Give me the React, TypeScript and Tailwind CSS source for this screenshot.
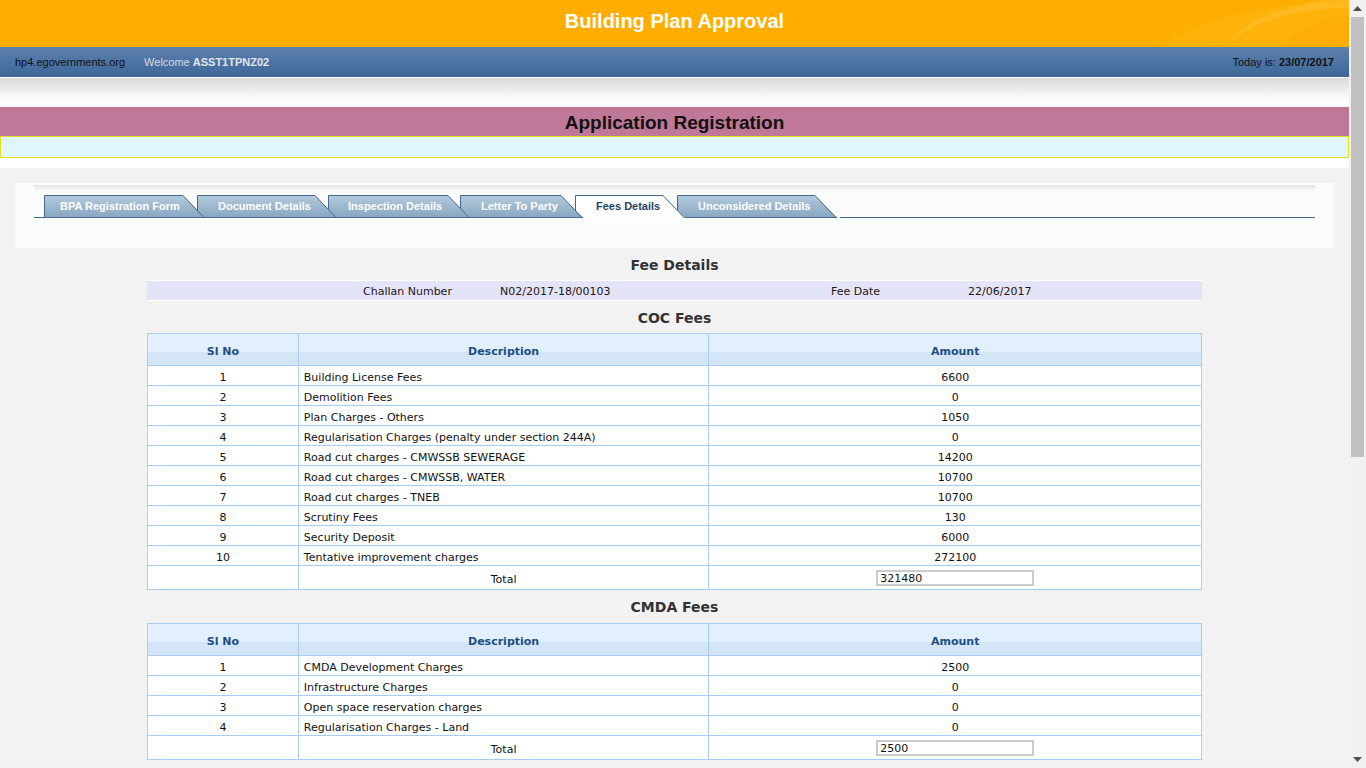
import React from 'react';

const cocFees: [string, string][] = [
  ['Building License Fees', '6600'],
  ['Demolition Fees', '0'],
  ['Plan Charges - Others', '1050'],
  ['Regularisation Charges (penalty under section 244A)', '0'],
  ['Road cut charges - CMWSSB SEWERAGE', '14200'],
  ['Road cut charges - CMWSSB, WATER', '10700'],
  ['Road cut charges - TNEB', '10700'],
  ['Scrutiny Fees', '130'],
  ['Security Deposit', '6000'],
  ['Tentative improvement charges', '272100'],
];

const cmdaFees: [string, string][] = [
  ['CMDA Development Charges', '2500'],
  ['Infrastructure Charges', '0'],
  ['Open space reservation charges', '0'],
  ['Regularisation Charges - Land', '0'],
];

const tabs = [
  { label: 'BPA Registration Form', w: 161, cls: 'w-[161px] z-[6] pl-[16px]' },
  { label: 'Document Details', w: 140, cls: 'w-[140px] z-[5] -ml-[8px] pl-[21px]' },
  { label: 'Inspection Details', w: 142, cls: 'w-[142px] z-[4] -ml-[9px] pl-[20px]' },
  { label: 'Letter To Party', w: 123, cls: 'w-[123px] z-[3] -ml-[10px] pl-[21px]' },
  { label: 'Fees Details', w: 110, cls: 'w-[110px] z-[2] -ml-[8px] pl-[21px]', active: true },
  { label: 'Unconsidered Details', w: 160, cls: 'w-[160px] z-[1] -ml-[8px] pl-[21px]' },
];

const Tab: React.FC<{ label: string; w: number; cls: string; active?: boolean; idx: number }> = ({ label, w, cls, active, idx }) => (
  <div className={`relative flex h-[23px] shrink-0 items-center ${cls}`}>
    <svg className="absolute inset-0" width={w} height={23} viewBox={`0 0 ${w} 23`}>
      <defs>
        <linearGradient id={`tabg${idx}`} x1="0" y1="0" x2="0" y2="1">
          <stop offset="0" stopColor="#b2cadc" />
          <stop offset="1" stopColor="#87a6c1" />
        </linearGradient>
      </defs>
      <polygon points={`0.5,23 0.5,0.5 ${w - 22},0.5 ${w},23`} fill={active ? '#ffffff' : `url(#tabg${idx})`} />
      <polyline points={`0.5,23 0.5,0.5 ${w - 22},0.5 ${w - 0.5},23`} fill="none" stroke="#46698f" strokeWidth="1" />
      {!active && <line x1="0" y1="22.5" x2={w} y2="22.5" stroke="#46698f" strokeWidth="1" />}
    </svg>
    <span className={`relative text-[11px] font-bold ${active ? 'text-[#1f4468]' : 'text-white'}`}>{label}</span>
  </div>
);

const FeeTable: React.FC<{ rows: [string, string][]; total: string }> = ({ rows, total }) => (
  <table className="w-[1055px] border-collapse bg-white text-[11px] leading-[14px] text-[#111]">
    <colgroup>
      <col className="w-[151px]" />
      <col className="w-[411px]" />
      <col className="w-[493px]" />
    </colgroup>
    <thead>
      <tr className="h-[32px] bg-[linear-gradient(#e2effc_0%,#e2effc_56%,#d3e5f6_56%,#d3e5f6_100%)] text-[#1d4f84]">
        <th className="border border-[#a9cdf0] px-0 pb-0 pt-[4px] font-bold">Sl No</th>
        <th className="border border-[#a9cdf0] px-0 pb-0 pt-[4px] font-bold">Description</th>
        <th className="border border-[#a9cdf0] px-0 pb-0 pt-[4px] font-bold">Amount</th>
      </tr>
    </thead>
    <tbody>
      {rows.map(([d, a], i) => (
        <tr key={d} className="h-[20px]">
          <td className="border border-[#a9cdf0] px-0 pb-0 pt-[4px] text-center">{i + 1}</td>
          <td className="border border-[#a9cdf0] px-[5px] pb-0 pt-[4px]">{d}</td>
          <td className="border border-[#a9cdf0] px-0 pb-0 pt-[4px] text-center">{a}</td>
        </tr>
      ))}
      <tr className="h-[24px]">
        <td className="border border-[#a9cdf0] p-0"></td>
        <td className="border border-[#a9cdf0] px-0 pb-0 pt-[4px] text-center">Total</td>
        <td className="border border-[#a9cdf0] p-0">
          <div className="flex justify-center">
            <div className="flex h-[16px] w-[158px] items-center border-2 border-[#cbcbcb] bg-white px-[2px] pt-[1px] text-[11px] leading-none">
              {total}
            </div>
          </div>
        </td>
      </tr>
    </tbody>
  </table>
);

export default function App() {
  return (
    <div className="flex h-[768px] w-[1366px] overflow-hidden bg-white font-['Liberation_Sans',Arial,sans-serif]">
      <div className="flex w-[1349px] flex-col">
        {/* Header */}
        <div className="relative flex h-[47px] items-center justify-center bg-[#ffae00] pb-[5px]">
          <svg className="absolute right-0 top-0" width="220" height="47" viewBox="0 0 220 47">
            <path d="M30 47 C 70 18, 140 2, 220 4 L220 47 Z" fill="#ffb20a" />
            <path d="M95 47 C 120 22, 170 8, 220 8 L220 0 C 170 0, 120 14, 95 47 Z" fill="#ffbd2a" opacity="0.7" />
            <path d="M150 47 C 170 28, 195 18, 220 16 L220 47 Z" fill="#ffa900" opacity="0.5" />
          </svg>
          <h1 className="relative text-[20px] font-bold text-white">Building Plan Approval</h1>
        </div>
        <div className="flex h-[30px] items-center bg-[linear-gradient(#5b80ad,#3e6798)] pl-[15px] pr-[15px] text-[11px]">
          <span className="text-[#111]">hp4.egovernments.org</span>
          <span className="ml-[19px] text-[#d6dce6]">
            Welcome <b className="text-[#e2e6ee]">ASST1TPNZ02</b>
          </span>
          <span className="ml-auto text-[#111]">
            Today is: <b>23/07/2017</b>
          </span>
        </div>
        <div className="h-[1px] bg-white" />
        <div className="h-[29px] bg-[linear-gradient(#dadada,#ffffff_80%)]" />

        {/* Page title */}
        <div className="flex h-[29px] items-center justify-center bg-[#bf7898] pt-[3px]">
          <h2 className="text-[19px] font-bold text-[#111]">Application Registration</h2>
        </div>
        <div className="h-[22px] border border-[#e6e019] bg-[#dff6fc]" />
        <div className="h-[10px] bg-white" />

        {/* Content */}
        <div className="flex-1 bg-[#f2f2f2] px-[15px] pt-[15px] font-['DejaVu_Sans',Verdana,sans-serif]">
          <div className="h-[65px] bg-[#fbfcfb] px-[19px] pt-[2px] font-['Liberation_Sans',Arial,sans-serif]">
            <div className="h-[7px] bg-[linear-gradient(#e4e4e4,#fbfcfb)]" />
            <div className="mt-[3px] flex h-[23px] items-end">
              <div className="h-full w-[10px] border-b border-[#46698f]" />
              {tabs.map((t, i) => (
                <Tab key={t.label} idx={i} label={t.label} w={t.w} cls={t.cls} active={t.active} />
              ))}
              <div className="ml-[3px] h-full flex-1 border-b border-[#46698f]" />
            </div>
          </div>

          <div className="mx-auto w-[1055px]">
            <div className="flex h-[32px] items-center justify-center pt-[2px] text-[14px] font-bold text-[#333]">Fee Details</div>
            <div className="flex h-[21px] items-center border-y border-white bg-[#e4e4f8] pl-[216px] pt-[3px] text-[11px] text-[#1e1414]">
              <span className="w-[137px]">Challan Number</span>
              <span className="w-[331px]">N02/2017-18/00103</span>
              <span className="w-[137px]">Fee Date</span>
              <span>22/06/2017</span>
            </div>
            <div className="flex h-[32px] items-center justify-center pt-[2px] text-[14px] font-bold text-[#333]">COC Fees</div>
            <FeeTable rows={cocFees} total="321480" />
            <div className="flex h-[33px] items-center justify-center pt-[2px] text-[14px] font-bold text-[#333]">CMDA Fees</div>
            <FeeTable rows={cmdaFees} total="2500" />
          </div>
        </div>
      </div>

      {/* Scrollbar */}
      <div className="flex w-[17px] flex-col items-center bg-[#f1f1f1]">
        <div className="flex h-[17px] items-center justify-center">
          <svg width="9" height="5" viewBox="0 0 9 5">
            <polygon points="0,5 4.5,0 9,5" fill="#505050" />
          </svg>
        </div>
        <div className="h-[440px] w-[13px] bg-[#c1c1c1]" />
        <div className="flex-1" />
        <div className="flex h-[17px] items-center justify-center">
          <svg width="9" height="5" viewBox="0 0 9 5">
            <polygon points="0,0 9,0 4.5,5" fill="#505050" />
          </svg>
        </div>
      </div>
    </div>
  );
}
